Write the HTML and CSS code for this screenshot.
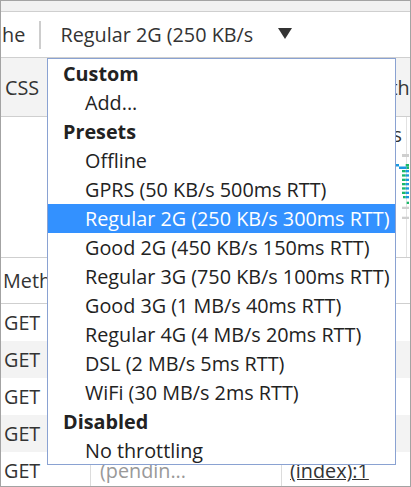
FILE: index.html
```html
<!DOCTYPE html>
<html>
<head>
<meta charset="utf-8">
<link rel="stylesheet" href="styles.css">
</head>
<body>
<div class="frame">
  <div class="topband"></div>
  <div class="toolbar">
    <span class="cache">he</span>
    <span class="sep"></span>
    <span class="throttle">Regular 2G (250 KB/s</span>
    <svg class="caret" width="14" height="11" viewBox="0 0 14 11"><polygon points="0,0 14,0 7,11" fill="#333"/></svg>
  </div>
  <div class="filterbar">
    <span class="f-css">CSS</span>
    <span class="f-other">Other</span>
  </div>
  <div class="overview">
    <svg class="chart" width="409" height="140" viewBox="0 0 409 140">
      <line x1="405.5" y1="0" x2="405.5" y2="140" stroke="#e2e2e2" stroke-width="1"/>
      <text x="401" y="25" text-anchor="end" class="tlabel">1000 ms</text>
      <rect x="401" y="37" width="7" height="3" fill="#cfcfcf"/>
      <rect x="395" y="47" width="3" height="2.5" fill="#1a98e0"/>
      <rect x="404.7" y="47" width="3.3" height="2.5" fill="#1bb86a"/>
      <rect x="398" y="49.5" width="7.7" height="2.5" fill="#1a98e0"/>
      <rect x="405.7" y="49.5" width="2.3" height="2.5" fill="#1bb86a"/>
      <rect x="401" y="53" width="3.7" height="2.3" fill="#1bb86a"/>
      <rect x="404.7" y="53" width="3.3" height="2.3" fill="#1a98e0"/>
      <rect x="401" y="57.3" width="3.7" height="2.3" fill="#1bb86a"/>
      <rect x="404.7" y="57.3" width="3.3" height="2.3" fill="#1a98e0"/>
      <rect x="401" y="61.7" width="3.7" height="2.3" fill="#1bb86a"/>
      <rect x="404.7" y="61.7" width="3.3" height="2.3" fill="#1a98e0"/>
      <rect x="401" y="66" width="3.7" height="2.3" fill="#1bb86a"/>
      <rect x="404.7" y="66" width="3.3" height="2.3" fill="#1a98e0"/>
      <rect x="401" y="70.3" width="3.7" height="2.3" fill="#1bb86a"/>
      <rect x="404.7" y="70.3" width="3.3" height="2.3" fill="#1a98e0"/>
      <rect x="401" y="74.7" width="3.7" height="2.3" fill="#1bb86a"/>
      <rect x="404.7" y="74.7" width="3.3" height="2.3" fill="#1a98e0"/>
      <rect x="402" y="79" width="2.7" height="2.3" fill="#1bb86a"/>
      <rect x="404.7" y="79" width="3.3" height="2.3" fill="#1a98e0"/>
      <rect x="405.7" y="84.7" width="2.3" height="2.3" fill="#1bb86a"/>
      <rect x="401" y="89.7" width="7" height="2.3" fill="#cfcfcf"/>
      <rect x="401" y="99.7" width="7" height="2.3" fill="#cfcfcf"/>
    </svg>
  </div>
  <div class="thead">
    <div class="c1">Method</div>
  </div>
  <div class="row"><div class="c1">GET</div><div class="c2"></div><div class="c3"></div></div>
  <div class="row alt"><div class="c1">GET</div><div class="c2"></div><div class="c3"></div></div>
  <div class="row"><div class="c1">GET</div><div class="c2"></div><div class="c3"></div></div>
  <div class="row alt"><div class="c1">GET</div><div class="c2"></div><div class="c3"></div></div>
  <div class="row"><div class="c1">GET</div><div class="c2 pending">(pendin...</div><div class="c3"><span class="link">(index):1</span></div></div>

  <div class="menu">
    <div class="mh">Custom</div>
    <div class="mi">Add...</div>
    <div class="mh">Presets</div>
    <div class="mi">Offline</div>
    <div class="mi">GPRS (50 KB/s 500ms RTT)</div>
    <div class="mi sel">Regular 2G (250 KB/s 300ms RTT)</div>
    <div class="mi">Good 2G (450 KB/s 150ms RTT)</div>
    <div class="mi">Regular 3G (750 KB/s 100ms RTT)</div>
    <div class="mi">Good 3G (1 MB/s 40ms RTT)</div>
    <div class="mi">Regular 4G (4 MB/s 20ms RTT)</div>
    <div class="mi">DSL (2 MB/s 5ms RTT)</div>
    <div class="mi">WiFi (30 MB/s 2ms RTT)</div>
    <div class="mh">Disabled</div>
    <div class="mi">No throttling</div>
  </div>
</div>
</body>
</html>
```

FILE: styles.css
```css
html, body {
  margin: 0;
  padding: 0;
  background: #fff;
}
body {
  font-family: "Open Sans", "Noto Sans", sans-serif;
  font-size: 19.8px;
  color: #222;
}
.frame {
  position: relative;
  width: 411px;
  height: 487px;
  box-sizing: border-box;
  border: 1px solid #a3a3a3;
  overflow: hidden;
  background: #fff;
}
.topband {
  height: 10px;
  background: #f1f1f1;
  border-bottom: 1px solid #cfcfcf;
}
.toolbar {
  height: 45px;
  border-bottom: 1px solid #cfcfcf;
  display: flex;
  align-items: center;
  white-space: nowrap;
}
.cache {
  width: 37px;
  padding-left: 1px;
  overflow: hidden;
  color: #333;
}
.sep {
  width: 1.5px;
  height: 28px;
  background: #cdcdcd;
}
.throttle {
  width: 217px;
  margin-left: 20px;
  color: #333;
}
.caret {
  display: block;
  margin-top: -3px;
}
.filterbar {
  height: 58px;
  background: #f3f3f3;
  border-bottom: 1px solid #cfcfcf;
  display: flex;
  align-items: center;
  white-space: nowrap;
  color: #333;
}
.f-css {
  margin-left: 4px;
}
.f-other {
  margin-left: 336px;
}
.overview {
  height: 140px;
  border-bottom: 1px solid #cfcfcf;
}
.chart {
  display: block;
}
.tlabel {
  font-family: "Open Sans", "Noto Sans", sans-serif;
  font-size: 19.8px;
  fill: #333;
}
.thead {
  height: 45px;
  border-bottom: 1px solid #cfcfcf;
  display: flex;
  align-items: center;
  color: #333;
}
.thead .c1 {
  padding-left: 2px;
}
.row {
  height: 37px;
  display: flex;
  align-items: stretch;
  color: #333;
}
.row.alt {
  background: #f3f3f3;
}
.row .c1, .row .c2, .row .c3 {
  display: flex;
  align-items: center;
  white-space: nowrap;
}
.row .c1 {
  width: 86px;
  padding-left: 3px;
  border-right: 1px solid #dcdcdc;
}
.row .c2 {
  width: 181px;
  padding-left: 9px;
  border-right: 1px solid #dcdcdc;
}
.row .c3 {
  flex: 1;
  padding-left: 8px;
}
.pending {
  color: #999;
}
.link {
  text-decoration: underline;
  color: #333;
}
.menu {
  position: absolute;
  left: 46px;
  top: 57px;
  width: 349px;
  height: 407px;
  box-sizing: border-box;
  border: 1px solid #8aa2d2;
  background: #fff;
}
.mh, .mi {
  height: 29px;
  line-height: 29px;
  white-space: nowrap;
  color: #222;
}
.mh {
  padding-left: 15px;
  font-weight: 700;
}
.mi {
  padding-left: 37px;
}
.mi.sel {
  background: #3391ff;
  color: #fff;
}
```
